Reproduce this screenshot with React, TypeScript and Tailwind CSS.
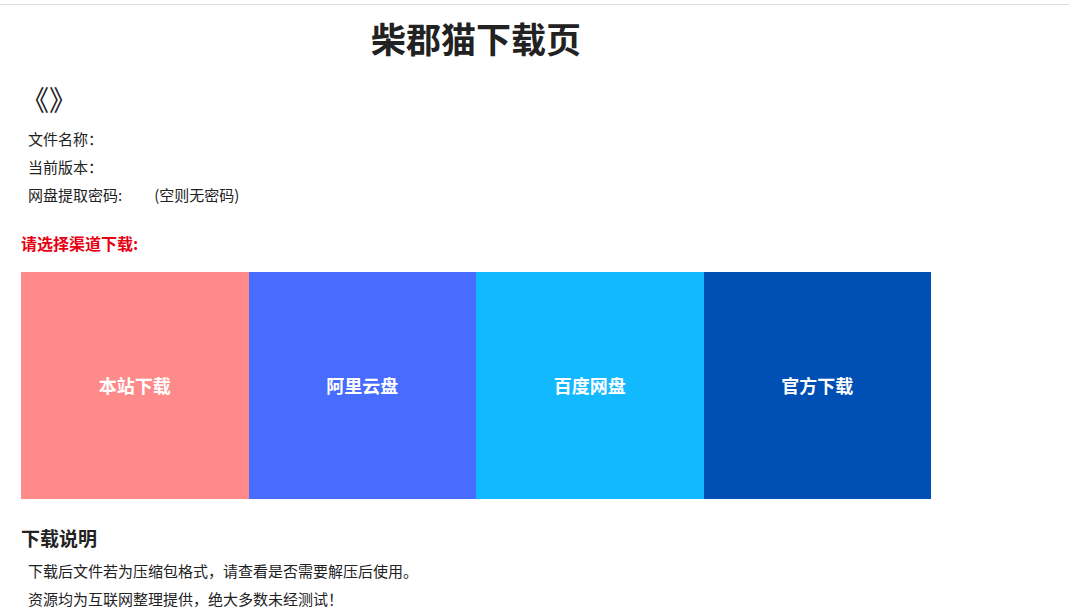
const channels = [
  { name: '本站下载', bg: 'bg-[#ff8a8a]' },
  { name: '阿里云盘', bg: 'bg-[#476cff]' },
  { name: '百度网盘', bg: 'bg-[#12b9ff]' },
  { name: '官方下载', bg: 'bg-[#004fb4]' },
];

export default function App() {
  return (
    <div
      className="min-h-screen bg-white text-[#333]"
      style={{ fontFamily: '"Noto Sans CJK SC", "Noto Sans", sans-serif' }}
    >
      <div className="h-[4px]" />
      <div className="border-t border-[#ddd]" />
      <div className="w-[952px] px-[21px]">
        <h1 className="mt-[11px] text-center text-[35px] font-bold leading-[44px] text-[#222]">柴郡猫下载页</h1>

        <h2 className="mt-[19px] text-[28px] leading-[40px] text-[#222]">《》</h2>

        <ul className="mt-[6px] pl-[7px] text-[15px] leading-[28px] text-[#222]">
          <li>文件名称：</li>
          <li>当前版本：</li>
          <li>
            网盘提取密码:<span className="ml-[32px]">(空则无密码)</span>
          </li>
        </ul>

        <p className="mt-[22px] text-[16px] font-bold leading-[24px] text-[#e60012]">请选择渠道下载:</p>

        <div className="mt-[17px] grid grid-cols-4">
          {channels.map((c) => (
            <a
              key={c.name}
              className={`${c.bg} flex h-[227px] items-center justify-center text-[18px] font-bold text-white`}
            >
              {c.name}
            </a>
          ))}
        </div>

        <h3 className="mt-[25px] text-[19px] font-bold leading-[28px] text-[#222]">下载说明</h3>
        <div className="mt-[5px] pl-[7px] text-[15px] leading-[28px] text-[#222]">
          <p>下载后文件若为压缩包格式，请查看是否需要解压后使用。</p>
          <p>资源均为互联网整理提供，绝大多数未经测试！</p>
        </div>
      </div>
    </div>
  );
}
